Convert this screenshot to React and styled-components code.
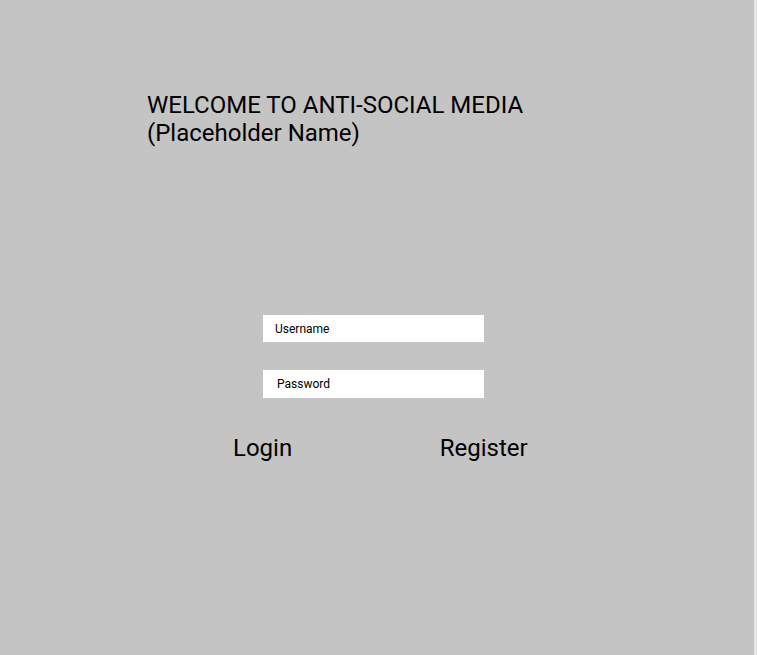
import React from 'react';
import styled, { createGlobalStyle } from 'styled-components';

const GlobalStyle = createGlobalStyle`
  html, body {
    margin: 0;
    padding: 0;
    background: #e6e6e6;
  }
  body {
    font-family: Roboto, "Liberation Sans", sans-serif;
  }
`

const Page = styled.div`
  width: 754px;
  height: 655px;
  background: #c4c4c4;
  display: flex;
  flex-direction: column;
  box-sizing: border-box;
  padding-top: 91px;
`

const Title = styled.h1`
  margin: 0 0 0 147px;
  font-size: 24px;
  line-height: 28px;
  font-weight: 400;
  color: #000;
`

const Form = styled.form`
  display: flex;
  flex-direction: column;
  margin: 168px 0 0 263px;
  gap: 28px;
`

const Field = styled.input`
  width: 221px;
  height: ${props => props.$h || 27}px;
  box-sizing: border-box;
  border: none;
  outline: none;
  background: #fff;
  padding: 0 0 0 ${props => props.$pad || 12}px;
  font-family: Roboto, "Liberation Sans", sans-serif;
  font-size: 12px;
  color: #000;
  &::placeholder {
    color: #000;
    opacity: 1;
  }
`

const Actions = styled.div`
  display: flex;
  margin: 36px 0 0 233px;
  gap: 147.6px;
`

const TextButton = styled.button`
  background: none;
  border: none;
  padding: 0;
  margin: 0;
  font-family: Roboto, "Liberation Sans", sans-serif;
  font-size: 24px;
  line-height: 28px;
  color: #000;
  cursor: pointer;
`

const App = () => {
  return (
    <>
      <GlobalStyle />
      <Page>
        <Title>
          WELCOME TO ANTI-SOCIAL MEDIA
          <br />
          (Placeholder Name)
        </Title>
        <Form onSubmit={e => e.preventDefault()}>
          <Field type="text" placeholder="Username" />
          <Field type="password" placeholder="Password" $pad={14} $h={28} />
        </Form>
        <Actions>
          <TextButton>Login</TextButton>
          <TextButton>Register</TextButton>
        </Actions>
      </Page>
    </>
  );
};

export default App;
